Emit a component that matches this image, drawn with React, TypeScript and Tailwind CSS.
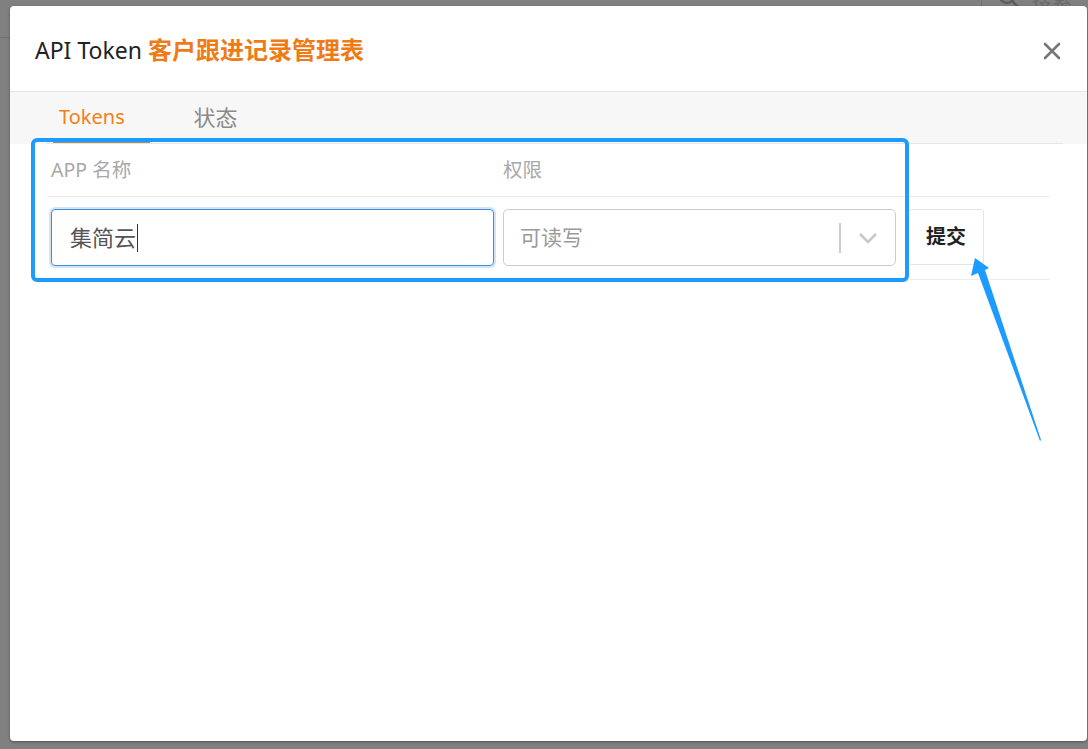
import React from 'react';

const font = '"Noto Sans", "Noto Sans CJK SC", sans-serif';

function CloseIcon() {
  return (
    <svg width="18" height="18" viewBox="0 0 18 18" fill="none">
      <path d="M2 2 L16 16 M16 2 L2 16" stroke="#777" strokeWidth="2.6" strokeLinecap="round" />
    </svg>
  );
}

function Chevron() {
  return (
    <svg width="22" height="14" viewBox="0 0 22 14" fill="none">
      <path d="M3 3 L11 11 L19 3" stroke="#c8c8c8" strokeWidth="2.6" />
    </svg>
  );
}

export default function App() {
  return (
    <div
      className="relative w-[1088px] h-[749px] overflow-hidden bg-[#808080]"
      style={{ fontFamily: font }}
    >
      {/* dimmed page behind the dialog */}
      <div className="h-[38px] border-b border-[#727272] flex justify-end">
        <div className="w-[107px] h-full border-l border-[#6f6f6f] flex items-start gap-3 pl-4">
          <svg width="22" height="22" viewBox="0 0 22 22" fill="none" className="-mt-[13px]">
            <circle cx="9" cy="9" r="7" stroke="#5e5e5e" strokeWidth="2.5" />
            <path d="M14 14 L20 20" stroke="#5e5e5e" strokeWidth="2.5" />
          </svg>
          <span className="-mt-[14px] text-[20px] text-[#6a6a6a]">搜索</span>
        </div>
      </div>

      {/* dialog */}
      <div className="absolute left-[10px] top-[6px] w-[1077px] h-[735px] bg-white rounded-[4px] shadow-[0_1px_3px_rgba(0,0,0,0.35)] flex flex-col">
        <header className="h-[86px] shrink-0 border-b border-[#e5e5e5] flex items-center justify-between pl-[25px] pr-[26px] pt-[3px]">
          <h4 className="text-[23px] text-[#222] leading-none">
            API Token <span className="text-[24px] font-bold text-[#ef7b16]">客户跟进记录管理表</span>
          </h4>
          <button className="mt-[2px]">
            <CloseIcon />
          </button>
        </header>

        {/* tabs */}
        <div className="h-[52px] shrink-0 bg-[#f7f7f7]">
          <div className="ml-[37px] mr-[24px] h-full border-b border-[#e6e6e6] flex pl-[6px] gap-[28px]">
            <div className="h-full pl-[6px] w-[97px] flex items-center border-b-2 border-[#9f8e70] text-[20px] text-[#f28018]">
              Tokens
            </div>
            <div className="h-full w-[75px] flex items-center justify-center text-[22px] text-[#8a8a8a]">
              状态
            </div>
          </div>
        </div>

        {/* table */}
        <div className="ml-[37px] w-[1003px]">
          <div className="h-[53px] border-b border-[#ececec] flex items-center text-[19.5px] text-[#a8a8a8]">
            <div className="pl-[4px] w-[456px]">APP 名称</div>
            <div>权限</div>
          </div>
          <div className="h-[83px] border-b border-[#ececec] flex items-start pt-[12px] pl-[4px]">
            <div className="w-[443px] h-[57px] rounded-[4px] border border-[#3a8ee0] ring-[2px] ring-[#d3e4f7] flex items-center pl-[18px] text-[22px] text-[#555]">
              集简云
              <span className="ml-[1px] w-[1px] h-[28px] bg-[#333]" />
            </div>
            <div className="ml-[9px] w-[393px] h-[57px] rounded-[5px] border border-[#cccccc] flex items-center pl-[16px] pr-[16px]">
              <span className="flex-1 text-[21px] text-[#9a9a9a]">可读写</span>
              <span className="w-[2px] h-[30px] bg-[#cccccc] mr-[16px]" />
              <Chevron />
            </div>
            <button className="ml-[12px] w-[76px] h-[56px] rounded-[3px] border border-[#e4e4e4] text-[20px] font-bold text-[#222]">
              提交
            </button>
          </div>
        </div>
      </div>

      {/* annotation: highlight box */}
      <div className="absolute left-[31px] top-[138px] w-[878px] h-[144px] border-[4px] border-[#1e9bff] rounded-[6px]" />

      {/* annotation: arrow */}
      <svg className="absolute left-0 top-0" width="1088" height="749" viewBox="0 0 1088 749" fill="none">
        <polygon
          points="975,258 971,276 978,273 1040,441 1041,440 985,270 989,268"
          fill="#1e9bff"
        />
      </svg>
    </div>
  );
}
